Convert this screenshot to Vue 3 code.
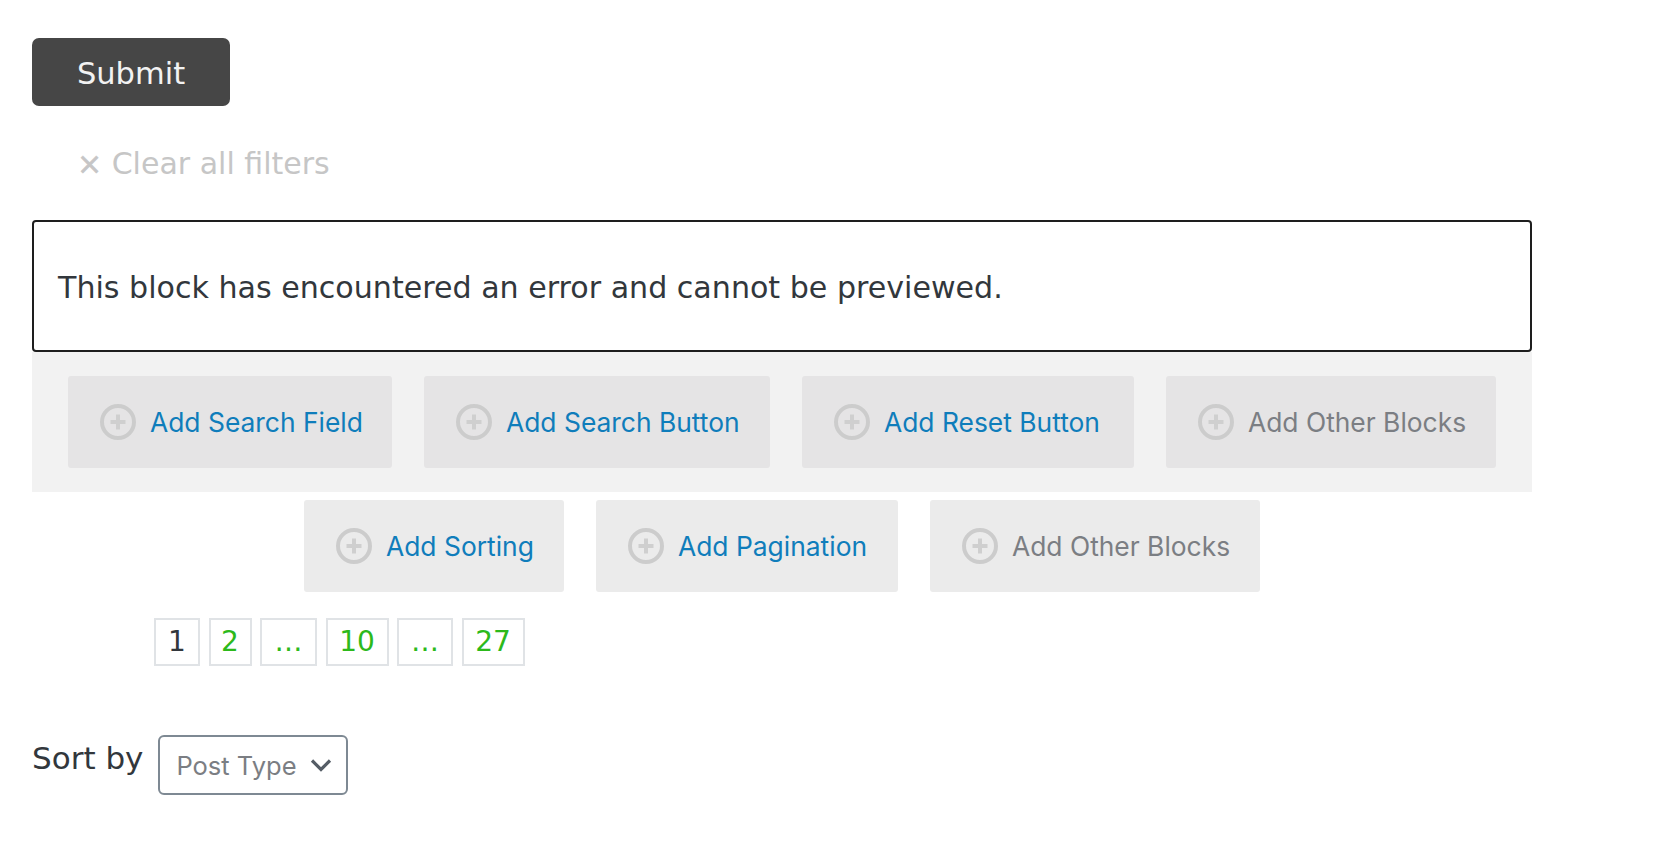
<script setup>
const topButtons = [
  { label: 'Add Search Field', muted: false, width: 324 },
  { label: 'Add Search Button', muted: false, width: 346 },
  { label: 'Add Reset Button', muted: false, width: 332 },
  { label: 'Add Other Blocks', muted: true, width: 330 }
]

const bottomButtons = [
  { label: 'Add Sorting', muted: false, width: 260 },
  { label: 'Add Pagination', muted: false, width: 302 },
  { label: 'Add Other Blocks', muted: true, width: 330 }
]

const pages = [
  { text: '1', width: 46 },
  { text: '2', width: 43 },
  { text: '…', width: 57 },
  { text: '10', width: 63 },
  { text: '…', width: 56 },
  { text: '27', width: 63 }
]
</script>

<template>
  <div class="page">
    <button class="submit">Submit</button>
    <div class="clear"><span class="clear-x">×</span> Clear all filters</div>

    <div class="notice">This block has encountered an error and cannot be previewed.</div>

    <div class="panel">
      <div
        v-for="(b, i) in topButtons"
        :key="i"
        class="add-btn"
        :class="{ muted: b.muted }"
        :style="{ width: b.width + 'px' }"
      >
        <svg class="plus" width="36" height="36" viewBox="0 0 36 36">
          <circle cx="18" cy="18" r="16" fill="none" stroke="#cccccc" stroke-width="4" />
          <path d="M18 10.5v15M10.5 18h15" stroke="#cfcfcf" stroke-width="4" />
        </svg>
        <span>{{ b.label }}</span>
      </div>
    </div>

    <div class="row-two">
      <div
        v-for="(b, i) in bottomButtons"
        :key="i"
        class="add-btn light"
        :class="{ muted: b.muted }"
        :style="{ width: b.width + 'px' }"
      >
        <svg class="plus" width="36" height="36" viewBox="0 0 36 36">
          <circle cx="18" cy="18" r="16" fill="none" stroke="#cccccc" stroke-width="4" />
          <path d="M18 10.5v15M10.5 18h15" stroke="#cfcfcf" stroke-width="4" />
        </svg>
        <span>{{ b.label }}</span>
      </div>
    </div>

    <div class="pagination">
      <span
        v-for="(p, i) in pages"
        :key="i"
        class="page-num"
        :class="{ current: i === 0 }"
        :style="{ width: p.width + 'px' }"
      >{{ p.text }}</span>
    </div>

    <div class="sort">
      <span class="sort-label">Sort by</span>
      <div class="select">
        <span>Post Type</span>
        <svg width="22" height="14" viewBox="0 0 22 14">
          <path d="M2 2.5l9 9 9-9" fill="none" stroke="#555d66" stroke-width="3.2" />
        </svg>
      </div>
    </div>
  </div>
</template>

<style>
html,
body {
  background: #ffffff;
}
</style>

<style scoped>
.page {
  width: 1500px;
  padding: 38px 0 0 32px;
  font-family: "DejaVu Sans", sans-serif;
  color: #32373c;
}

.submit {
  display: block;
  width: 198px;
  height: 68px;
  padding: 2px 0 0;
  border: none;
  border-radius: 7px;
  background: #464646;
  color: #f2f2f2;
  font-family: "DejaVu Sans", sans-serif;
  font-size: 30.5px;
}

.clear {
  margin: 38px 0 0 45px;
  height: 40px;
  line-height: 40px;
  font-size: 30px;
  color: #c6c6c6;
}

.clear-x {
  display: inline-block;
  -webkit-text-stroke: 0.6px #c6c6c6;
}

.notice {
  box-sizing: border-box;
  height: 132px;
  margin-top: 36px;
  padding: 0 24px;
  border: 2px solid #1e1e1e;
  border-radius: 4px;
  line-height: 132px;
  font-size: 30.1px;
  color: #32373c;
}

.panel {
  display: flex;
  justify-content: center;
  gap: 32px;
  padding: 24px 0;
  background: #f2f2f2;
}

.row-two {
  display: flex;
  justify-content: center;
  gap: 32px;
  margin-top: 8px;
}

.add-btn {
  box-sizing: border-box;
  display: flex;
  align-items: center;
  gap: 14px;
  height: 92px;
  padding-left: 32px;
  border-radius: 3px;
  background: #e5e4e5;
  color: #0f7dbb;
  font-family: Inter, sans-serif;
  font-size: 26.4px;
  white-space: nowrap;
}

.add-btn.light {
  background: #ebebeb;
}

.add-btn.muted {
  color: #7b7e83;
}

.plus {
  flex: none;
}

.pagination {
  display: flex;
  gap: 8.5px;
  margin: 26px 0 0 122px;
}

.page-num {
  box-sizing: border-box;
  height: 48px;
  border: 2px solid #e0e3e6;
  line-height: 44px;
  text-align: center;
  font-size: 28px;
  color: #2cb91b;
}

.page-num.current {
  color: #32373c;
}

.sort {
  display: flex;
  align-items: flex-start;
  gap: 15px;
  margin-top: 69px;
}

.sort-label {
  line-height: 47px;
  font-size: 31px;
}

.select {
  box-sizing: border-box;
  display: flex;
  align-items: center;
  gap: 13px;
  height: 60px;
  padding: 0 14px 0 16px;
  border: 2px solid #7e8993;
  border-radius: 6px;
  font-family: Inter, sans-serif;
  font-size: 25.5px;
  color: #7b7e83;
}
</style>
